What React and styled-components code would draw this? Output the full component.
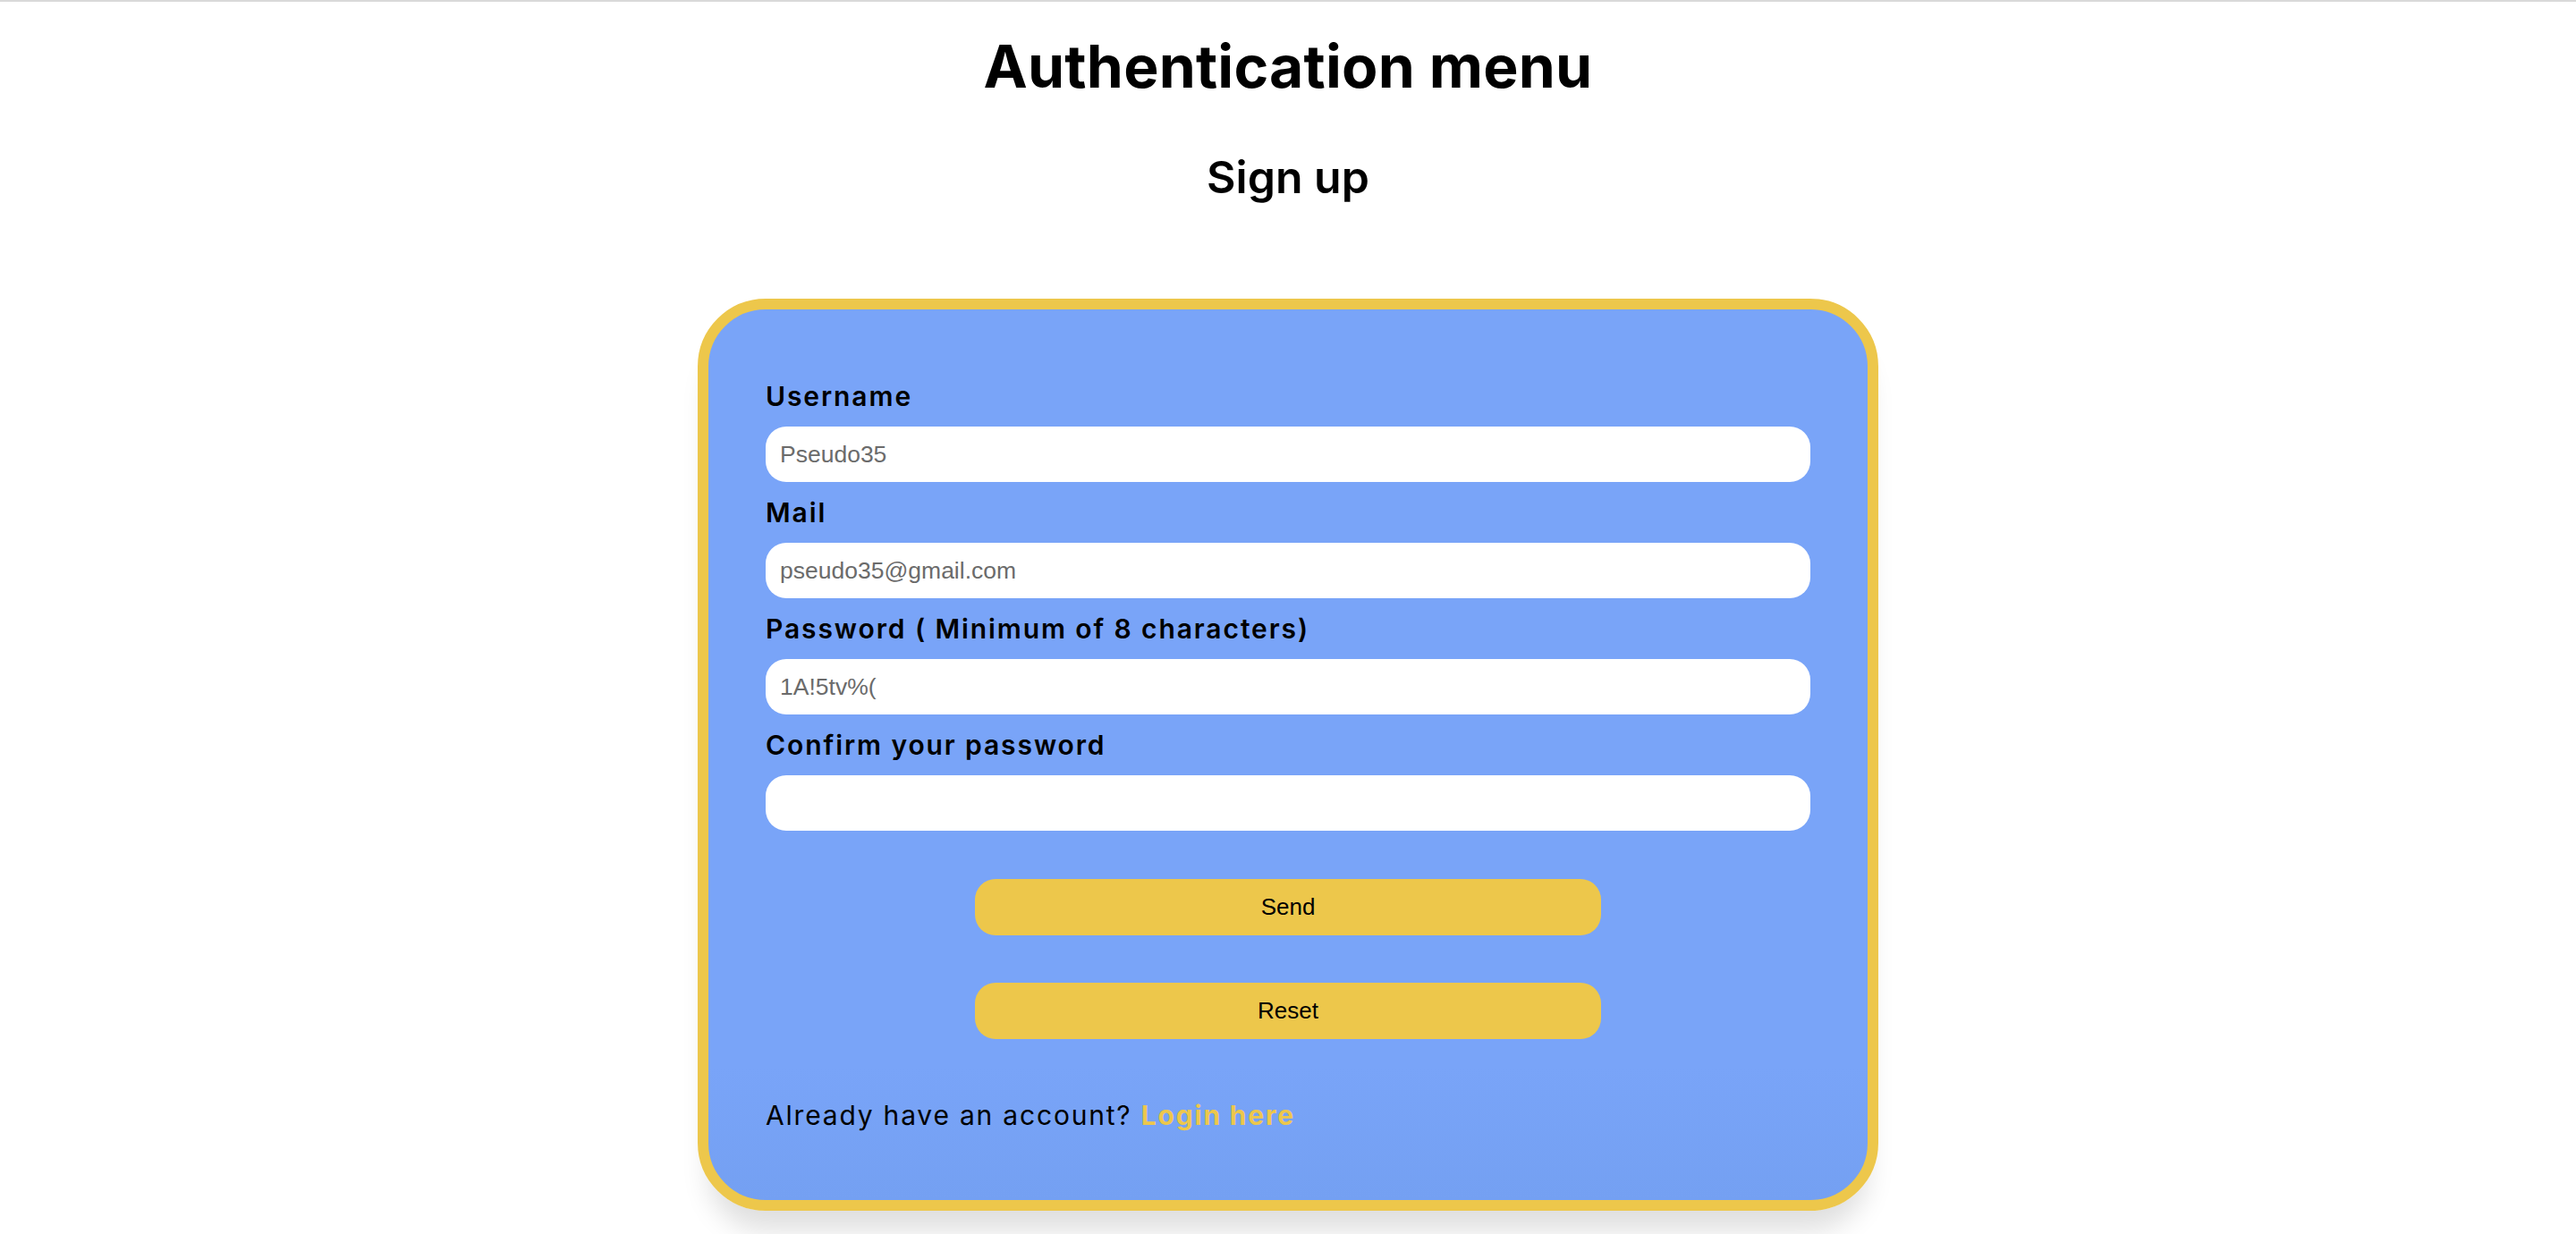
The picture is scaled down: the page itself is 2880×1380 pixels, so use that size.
import React from 'react'
import styled, { createGlobalStyle } from 'styled-components'

const Global = createGlobalStyle`
  html, body {
    margin: 0;
    padding: 0;
    background: #ffffff;
  }
  * {
    box-sizing: border-box;
  }
`

const Page = styled.div`
  min-height: 1380px;
  border-top: 2px solid #d9d9d9;
  display: flex;
  flex-direction: column;
  align-items: center;
  font-family: "Inter", "Noto Sans", sans-serif;
  color: #000;
  overflow: hidden;
`

const Title = styled.h1`
  margin: 32px 0 0;
  font-size: 66px;
  line-height: 80px;
  font-weight: 700;
  letter-spacing: 0.2px;
`

const SubTitle = styled.h2`
  margin: 54px 0 0;
  font-size: 50px;
  line-height: 60px;
  font-weight: 600;
`

const Card = styled.form`
  margin-top: 106px;
  width: 1320px;
  border: 12px solid #edc74b;
  border-radius: 76px;
  background: linear-gradient(180deg, #79a4f8 0%, #79a4f8 85%, #74a0f2 100%);
  padding: 79px 64px 77px;
  display: flex;
  flex-direction: column;
  box-shadow: 0 34px 30px -12px rgba(0, 0, 0, 0.13);
`

const Label = styled.label`
  display: block;
  font-size: 30px;
  line-height: 36px;
  font-weight: 600;
  letter-spacing: 1.9px;
  margin-top: ${p => (p.$first ? '0' : '16px')};
  margin-bottom: 16px;
`

const Input = styled.input`
  width: 100%;
  height: 62px;
  border: none;
  outline: none;
  border-radius: 23px;
  background: #fff;
  padding: 0 16px;
  font-family: "Liberation Sans", Arial, sans-serif;
  font-size: 26.5px;
  color: #6b6b6b;
  &::placeholder {
    color: #6b6b6b;
  }
`

const Buttons = styled.div`
  margin-top: 54px;
  display: flex;
  flex-direction: column;
  align-items: center;
  gap: 53px;
`

const Button = styled.button`
  width: 700px;
  height: 63px;
  border: none;
  border-radius: 23px;
  background: #edc74b;
  font-family: "Liberation Sans", Arial, sans-serif;
  font-size: 26px;
  color: #000;
  cursor: pointer;
`

const Footer = styled.p`
  margin: 67px 0 0;
  font-size: 30px;
  line-height: 36px;
  font-weight: 400;
  letter-spacing: 1.8px;
`

const LoginLink = styled.a`
  color: #edc74b;
  font-weight: 700;
  text-decoration: none;
`

const fields = [
  { name: 'username', label: 'Username', placeholder: 'Pseudo35', type: 'text' },
  { name: 'mail', label: 'Mail', placeholder: 'pseudo35@gmail.com', type: 'text' },
  { name: 'password', label: 'Password ( Minimum of 8 characters)', placeholder: '1A!5tv%(', type: 'text' },
  { name: 'confirm', label: 'Confirm your password', placeholder: '', type: 'password' },
]

export default function App() {
  return (
    <Page>
      <Global />
      <Title>Authentication menu</Title>
      <SubTitle>Sign up</SubTitle>
      <Card onSubmit={e => e.preventDefault()}>
        {fields.map((f, i) => (
          <div key={f.name}>
            <Label htmlFor={f.name} $first={i === 0}>{f.label}</Label>
            <Input id={f.name} name={f.name} type={f.type} placeholder={f.placeholder} />
          </div>
        ))}
        <Buttons>
          <Button type="submit">Send</Button>
          <Button type="reset">Reset</Button>
        </Buttons>
        <Footer>
          Already have an account? <LoginLink href="#">Login here</LoginLink>
        </Footer>
      </Card>
    </Page>
  )
}
